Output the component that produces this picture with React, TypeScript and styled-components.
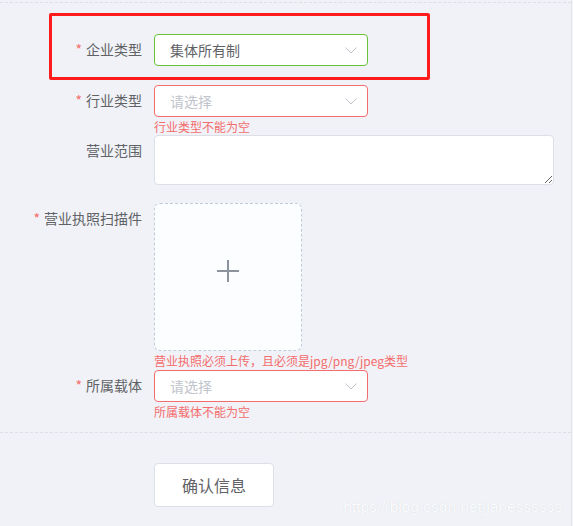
import styled, { createGlobalStyle } from "styled-components";

const GlobalStyle = createGlobalStyle`
  html, body {
    margin: 0;
    padding: 0;
    background: #f0f2f7;
  }
  body {
    font-family: "Noto Sans CJK SC", "Noto Sans", sans-serif;
  }
`;

const Page = styled.div`
  position: relative;
  width: 572px;
  height: 526px;
  padding-top: 2px;
  box-sizing: border-box;
  border-right: 1px solid #e4e6ec;
  overflow: hidden;
`;

const Section = styled.div`
  border-top: 1px dashed #dcdfe6;
  padding-top: 31px;
`;

const FormItem = styled.div<{ $mb: number }>`
  position: relative;
  display: flex;
  align-items: flex-start;
  margin-bottom: ${(p) => p.$mb}px;
`;

const Label = styled.label`
  width: 154px;
  box-sizing: border-box;
  padding-right: 12px;
  text-align: right;
  font-size: 14px;
  line-height: 30px;
  padding-bottom: 2px;
  color: #606266;
  white-space: nowrap;
`;

const Star = styled.span`
  color: #f56c6c;
  margin-right: 4px;
`;

const Content = styled.div`
  display: flex;
  flex-direction: column;
`;

const Select = styled.div<{ $state?: "ok" | "error" }>`
  width: 214px;
  height: 32px;
  box-sizing: border-box;
  display: flex;
  align-items: center;
  justify-content: space-between;
  padding: 0 10px 0 15px;
  background: #fff;
  border-radius: 4px;
  border: 1px solid
    ${(p) => (p.$state === "ok" ? "#67c23a" : p.$state === "error" ? "#f56c6c" : "#dcdfe6")};
  font-size: 14px;
  cursor: pointer;
`;

const Value = styled.span<{ $placeholder?: boolean }>`
  color: ${(p) => (p.$placeholder ? "#c0c4cc" : "#606266")};
  line-height: 28px;
`;

const ErrorText = styled.div`
  padding-top: 4px;
  font-size: 12px;
  line-height: 12px;
  color: #f56c6c;
  white-space: nowrap;
`;

const TextArea = styled.textarea`
  width: 400px;
  height: 50px;
  box-sizing: border-box;
  padding: 5px 15px;
  border: 1px solid #dcdfe6;
  border-radius: 4px;
  background: #fff;
  font-family: inherit;
  font-size: 14px;
  color: #606266;
  outline: none;
  resize: vertical;
  display: block;
`;

const Upload = styled.div`
  width: 148px;
  height: 148px;
  box-sizing: border-box;
  border: 1px dashed #c0ccda;
  border-radius: 6px;
  background: #fbfdff;
  display: flex;
  align-items: center;
  justify-content: center;
  padding-bottom: 12px;
  cursor: pointer;
`;

const Divider = styled.div`
  border-top: 1px dashed #dcdfe6;
  padding: 30px 0 0 154px;
`;

const Button = styled.button`
  width: 120px;
  height: 44px;
  background: #fff;
  border: 1px solid #dcdfe6;
  border-radius: 4px;
  font-family: inherit;
  font-size: 16px;
  color: #606266;
  cursor: pointer;
`;

const Highlight = styled.div`
  position: absolute;
  left: 49px;
  top: -21px;
  width: 381px;
  height: 67px;
  box-sizing: border-box;
  border: 3px solid #ff1c1c;
  border-radius: 2px;
  pointer-events: none;
`;

const Watermark = styled.div`
  position: absolute;
  right: 9px;
  bottom: 10px;
  font-family: "Liberation Sans", Arial, sans-serif;
  font-size: 15.5px;
  color: #fbfcfe;
  text-shadow: 0 0 1px rgba(0, 0, 0, 0.12);
`;

const Arrow = () => (
  <svg width="12" height="7" viewBox="0 0 12 7">
    <polyline points="0.5,0.5 6,6 11.5,0.5" fill="none" stroke="#c0c4cc" strokeWidth="1" />
  </svg>
);

const Plus = () => (
  <svg width="24" height="24" viewBox="0 0 24 24">
    <line x1="1" y1="12" x2="23" y2="12" stroke="#8c939d" strokeWidth="2" />
    <line x1="12" y1="1" x2="12" y2="23" stroke="#8c939d" strokeWidth="2" />
  </svg>
);

export default function App() {
  return (
    <>
      <GlobalStyle />
      <Page>
        <Section>
          <FormItem $mb={19}>
            <Highlight />
            <Label>
              <Star>*</Star>企业类型
            </Label>
            <Select $state="ok">
              <Value>集体所有制</Value>
              <Arrow />
            </Select>
          </FormItem>

          <FormItem $mb={2}>
            <Label>
              <Star>*</Star>行业类型
            </Label>
            <Content>
              <Select $state="error">
                <Value $placeholder>请选择</Value>
                <Arrow />
              </Select>
              <ErrorText>行业类型不能为空</ErrorText>
            </Content>
          </FormItem>

          <FormItem $mb={18}>
            <Label>营业范围</Label>
            <TextArea />
          </FormItem>

          <FormItem $mb={3}>
            <Label>
              <Star>*</Star>营业执照扫描件
            </Label>
            <Content>
              <Upload>
                <Plus />
              </Upload>
              <ErrorText>营业执照必须上传，且必须是jpg/png/jpeg类型</ErrorText>
            </Content>
          </FormItem>

          <FormItem $mb={14}>
            <Label>
              <Star>*</Star>所属载体
            </Label>
            <Content>
              <Select $state="error">
                <Value $placeholder>请选择</Value>
                <Arrow />
              </Select>
              <ErrorText>所属载体不能为空</ErrorText>
            </Content>
          </FormItem>

          <Divider>
            <Button>确认信息</Button>
          </Divider>
        </Section>
        <Watermark>https://blog.csdn.net/janessssss</Watermark>
      </Page>
    </>
  );
}
